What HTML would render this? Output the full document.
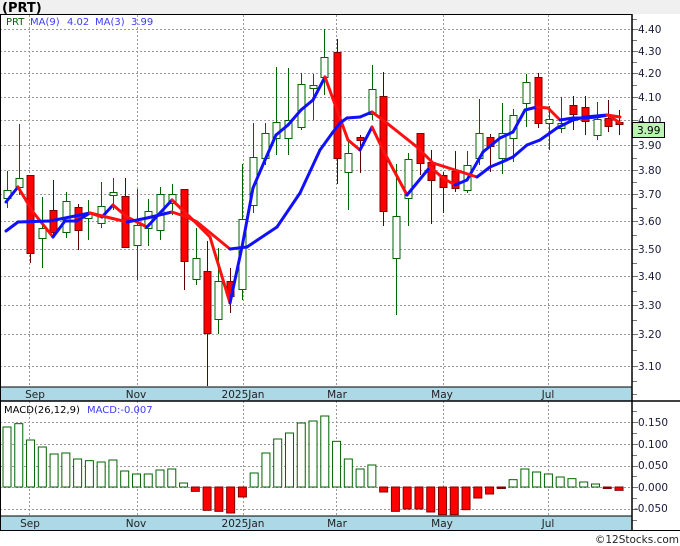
<!DOCTYPE html>
<html><head><meta charset="utf-8"><style>
html,body{margin:0;padding:0;background:#fff;}
svg{display:block;font-family:"DejaVu Sans","Liberation Sans",sans-serif;}
</style></head><body>
<svg id="c" width="680" height="546" viewBox="0 0 680 546" xmlns="http://www.w3.org/2000/svg">
<rect x="0" y="0" width="680" height="546" fill="#fff"/>
<rect x="0" y="0" width="680" height="14" fill="#f0f0f0"/>
<text x="2" y="12" font-size="13" font-weight="bold" fill="#000">(PRT)</text>
<g id="grid"></g>
<g id="candles"></g>
<g id="ma"></g>
<g id="macd"></g>
<rect x="0" y="387" width="632" height="14" fill="#add8e6"/>
<rect x="0" y="516" width="632" height="14" fill="#add8e6"/>
<line x1="0" y1="387" x2="632" y2="387" stroke="#000" stroke-width="1"/>
<line x1="0" y1="401" x2="680" y2="401" stroke="#000" stroke-width="1.5"/>
<line x1="0" y1="516" x2="632" y2="516" stroke="#000" stroke-width="1"/>
<line x1="0" y1="530.5" x2="680" y2="530.5" stroke="#000" stroke-width="1"/>
<line x1="0" y1="14.5" x2="632" y2="14.5" stroke="#000" stroke-width="1"/>
<line x1="0.5" y1="14" x2="0.5" y2="531" stroke="#000" stroke-width="1"/>
<line x1="632" y1="14" x2="632" y2="531" stroke="#000" stroke-width="1.5"/>
<g font-size="10.5" fill="#222" text-anchor="middle">
<text x="35" y="398">Sep</text><text x="136" y="398">Nov</text><text x="243" y="398">2025Jan</text><text x="337" y="398">Mar</text><text x="442" y="398">May</text><text x="548" y="398">Jul</text>
<text x="30" y="527">Sep</text><text x="136" y="527">Nov</text><text x="243" y="527">2025Jan</text><text x="337" y="527">Mar</text><text x="442" y="527">May</text><text x="548" y="527">Jul</text>
</g>
<g font-size="10.5" fill="#1a1a3a">
<text x="638" y="33">4.40</text><text x="638" y="55">4.30</text><text x="638" y="77">4.20</text><text x="638" y="101">4.10</text><text x="638" y="124">4.00</text><text x="638" y="149">3.90</text><text x="638" y="174">3.80</text><text x="638" y="198">3.70</text><text x="638" y="225">3.60</text><text x="638" y="253">3.50</text><text x="638" y="280">3.40</text><text x="638" y="309">3.30</text><text x="638" y="338">3.20</text><text x="638" y="370">3.10</text>
<text x="638" y="426">0.150</text><text x="638" y="448">0.100</text><text x="638" y="469">0.050</text><text x="638" y="491">0.000</text><text x="634" y="512">-0.050</text>
</g>
<rect x="632.5" y="122.5" width="32" height="15" fill="#b8f5b0" stroke="#000" stroke-width="1"/>
<text x="637" y="134" font-size="10.5" fill="#000">3.99</text>
<g font-size="10" fill="#3c3cff">
<text x="6" y="25" fill="#006400">PRT</text>
<text x="30" y="25">MA(9)</text><text x="67" y="25">4.02</text><text x="95" y="25">MA(3)</text><text x="131" y="25">3.99</text>
</g>
<text x="4" y="413" font-size="10" fill="#000">MACD(26,12,9)</text>
<text x="87" y="413" font-size="10" fill="#3c3cff">MACD:-0.007</text>
<text x="679" y="543" font-size="10.5" fill="#222" text-anchor="end">©12Stocks.com</text>
</svg>
<script>
var NS="http://www.w3.org/2000/svg";
function el(p,t,a){var e=document.createElementNS(NS,t);for(var k in a)e.setAttribute(k,a[k]);document.getElementById(p).appendChild(e);return e;}
var hy=[29,51,73,97,120,145,170,194,221,249,276,305,334,366];
hy.forEach(function(y){el("grid","line",{x1:0,y1:y+.5,x2:632,y2:y+.5,stroke:"#999","stroke-dasharray":"2,2"});el("grid","line",{x1:632,y1:y+.5,x2:638,y2:y+.5,stroke:"#777"});});
for(var i=0;i<hy.length-1;i++){var m=Math.round((hy[i]+hy[i+1])/2);el("grid","line",{x1:632,y1:m+.5,x2:637,y2:m+.5,stroke:"#777"});}
el("grid","line",{x1:632,y1:19.5,x2:637,y2:19.5,stroke:"#777"});el("grid","line",{x1:632,y1:381.5,x2:637,y2:381.5,stroke:"#777"});el("grid","line",{x1:632,y1:394.5,x2:637,y2:394.5,stroke:"#777"});
var my=[422,444,466,487,509];
my.forEach(function(y){el("grid","line",{x1:0,y1:y+.5,x2:632,y2:y+.5,stroke:"#999","stroke-dasharray":"2,2"});el("grid","line",{x1:632,y1:y+.5,x2:638,y2:y+.5,stroke:"#777"});});
[411,433,455,476,498,520].forEach(function(y){el("grid","line",{x1:632,y1:y+.5,x2:637,y2:y+.5,stroke:"#777"});});
[29,137,243,336,443,548].forEach(function(x){el("grid","line",{x1:x+.5,y1:15,x2:x+.5,y2:387,stroke:"#999","stroke-dasharray":"2,2"});el("grid","line",{x1:x+.5,y1:401,x2:x+.5,y2:516,stroke:"#999","stroke-dasharray":"2,2"});});
var C=[[7,171,190,198,208,'g'],[19,124,178,187,195,'g'],[30,175,175,253,263,'r'],[42,197,228,238,268,'g'],[53,180,210,232,238,'r'],[66,192,201,232,238,'g'],[78,204,207,230,250,'r'],[88,200,213,218,240,'g'],[101,182,206,223,228,'g'],[113,178,192,195,210,'g'],[125,178,196,247,248,'r'],[137,189,225,245,280,'g'],[148,199,211,228,246,'g'],[160,187,194,230,240,'g'],[172,184,194,203,215,'g'],[184,189,189,261,290,'r'],[196,228,258,279,285,'g'],[207,241,271,333,386,'r'],[218,248,281,319,334,'g'],[230,268,281,296,313,'r'],[242,164,219,289,300,'g'],[253,123,157,205,213,'g'],[265,123,133,158,165,'g'],[276,67,122,138,155,'g'],[288,68,120,138,155,'g'],[301,73,84,127,130,'g'],[313,74,85,88,120,'g'],[324,29,57,77,95,'g'],[337,39,52,158,184,'r'],[348,139,153,172,210,'g'],[360,135,137,140,173,'r'],[372,65,89,114,120,'g'],[383,72,96,211,226,'r'],[396,164,216,258,315,'g'],[408,153,159,198,226,'g'],[420,133,133,163,175,'r'],[431,150,162,180,224,'r'],[443,172,175,187,213,'r'],[455,151,171,188,192,'r'],[467,151,165,190,193,'g'],[479,99,133,158,165,'g'],[490,134,137,146,172,'r'],[502,103,133,158,174,'g'],[513,109,115,138,162,'g'],[526,74,82,103,127,'g'],[538,73,77,123,128,'r'],[549,106,119,123,150,'g'],[561,97,123,128,133,'g'],[573,96,105,114,130,'r'],[585,96,107,121,135,'r'],[597,102,119,135,140,'g'],[608,100,118,126,132,'r'],[619,110,122,124,135,'r']];
C.forEach(function(c){var x=c[0];var g=c[5]=='g';var col=g?"#006400":"#600000";
el("candles","line",{x1:x+.5,y1:c[1],x2:x+.5,y2:c[4],stroke:col,"stroke-width":1});
var h=Math.max(c[3]-c[2],2);
el("candles","rect",{x:x-3,y:c[2]+.5,width:7,height:h,fill:g?"#fff":"#ff0000",stroke:g?"#006400":"#800000","stroke-width":1});});
function line(pts){for(var i=0;i<pts.length-1;i++){var a=pts[i],b=pts[i+1];el("ma","line",{x1:a[0],y1:a[1],x2:b[0],y2:b[1],stroke:b[1]<=a[1]?"#1010ff":"#ff1010","stroke-width":3,"stroke-linecap":"round"});}}
line([[6,202],[18,187],[33,212],[53,237],[65,221],[77,221],[90,213],[102,217],[113,205],[127,217],[147,227],[160,213],[172,200],[193,220],[210,237],[230,303],[242,247],[253,188],[265,160],[276,135],[288,125],[301,110],[313,100],[325,77],[337,110],[348,140],[360,150],[372,127],[383,150],[407,195],[430,167],[443,178],[455,185],[467,180],[483,152],[500,138],[513,132],[525,110],[537,107],[548,108],[560,120],[573,118],[585,118],[597,117],[608,115],[620,123]]);
line([[6,231],[18,222],[50,221],[90,213],[127,222],[147,218],[172,212],[187,217],[197,222],[230,249],[247,247],[277,227],[300,193],[320,150],[333,132],[340,123],[347,118],[360,117],[372,112],[383,120],[417,147],[433,163],[477,177],[490,167],[502,162],[513,157],[527,145],[540,140],[557,128],[573,120],[585,117],[607,115],[620,117]]);
var Z=[142,132,181,202,223,220,238,243,247,241,274,283,283,271,268,310,335,392,395,400,352,280,220,178,160,130,124,109,185,238,268,256,337,395,388,388,397,405,405,390,355,343,325,300,268,277,283,292,297,307,313,325,332];
Z.forEach(function(v,i){var x=7+i*11.77;var d=(322-v)/3;var top=d>0?487-d:487;var h=Math.max(Math.abs(d),1.5);
var g=d>0;var small=!g&&Math.abs(d)<2;
el("macd","rect",{x:x-4,y:top,width:8,height:h,fill:g?"#fff":(small?"#800000":"#ff0000"),stroke:g?"#006400":"#800000","stroke-width":1});});
</script>
</body></html>
